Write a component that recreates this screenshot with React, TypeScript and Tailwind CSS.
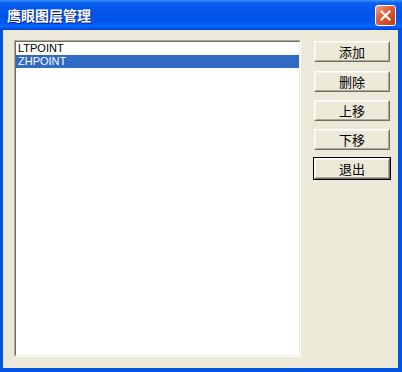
const ITEMS = ["LTPOINT", "ZHPOINT"];
const BUTTONS = ["添加", "删除", "上移", "下移", "退出"];

function CloseButton() {
  return (
    <div className="flex h-[21px] w-[21px] items-center justify-center rounded-[3px] border border-white bg-[linear-gradient(135deg,#F0A58A_0%,#E5663F_35%,#D34A22_70%,#C13E1A_100%)]">
      <svg width="11" height="11" viewBox="0 0 11 11">
        <path d="M1.5 1.5 L9.5 9.5 M9.5 1.5 L1.5 9.5" stroke="white" strokeWidth="2.2" strokeLinecap="square" />
      </svg>
    </div>
  );
}

function ClassicButton({ label, isDefault }: { label: string; isDefault?: boolean }) {
  return (
    <div className={isDefault ? "border border-black" : "border border-transparent"}>
      <div className="border border-t-white border-l-white border-r-[#716F64] border-b-[#716F64]">
        <div className="flex h-[19px] w-[74px] items-center justify-center border border-t-[#F5F4EE] border-l-[#F5F4EE] border-r-[#ACA899] border-b-[#ACA899] bg-[#ECE9D8] text-[13px] text-black [font-family:'Noto_Sans_CJK_SC',sans-serif]">
          {label}
        </div>
      </div>
    </div>
  );
}

export default function App() {
  return (
    <div className="flex h-[372px] w-[402px] flex-col bg-[#0055E5]">
      {/* Title bar */}
      <div className="flex h-[30px] shrink-0 items-center justify-between bg-[linear-gradient(to_bottom,#3A93FF_0%,#0A5FF0_10%,#0053E6_45%,#0058EE_75%,#0066FF_88%,#0050E8_95%,#0040C8_100%)] pl-[7px] pr-[6px]">
        <span className="text-[14px] font-bold text-white [font-family:'Noto_Sans_CJK_SC',sans-serif] [text-shadow:1px_1px_0_#0A1E88]">
          鹰眼图层管理
        </span>
        <CloseButton />
      </div>

      {/* Client area */}
      <div className="flex flex-1 border-b-[4px] border-l-[3px] border-r-[4px] border-[#0055E5] bg-[#ECE9D8] pl-[11px] pt-[10px]">
        {/* List box */}
        <div className="h-[317px] w-[287px] border border-t-[#ACA899] border-l-[#ACA899] border-r-white border-b-white">
          <div className="h-full w-full border border-t-[#716F64] border-l-[#716F64] border-r-[#F1EFE2] border-b-[#F1EFE2] bg-white">
            {ITEMS.map((item, i) => (
              <div
                key={item}
                className={
                  "h-[13px] pl-[2px] text-[11px] leading-[13px] [font-family:'Liberation_Sans',sans-serif] " +
                  (i === 1 ? "bg-[#316AC5] text-white" : "text-black")
                }
              >
                {item}
              </div>
            ))}
          </div>
        </div>

        {/* Buttons */}
        <div className="ml-[12px] flex flex-col">
          {BUTTONS.map((b, i) => (
            <div key={b} className={i === 0 ? "" : i === 1 ? "mt-[7px]" : "mt-[6px]"}>
              <ClassicButton label={b} isDefault={b === "退出"} />
            </div>
          ))}
        </div>
      </div>
    </div>
  );
}
